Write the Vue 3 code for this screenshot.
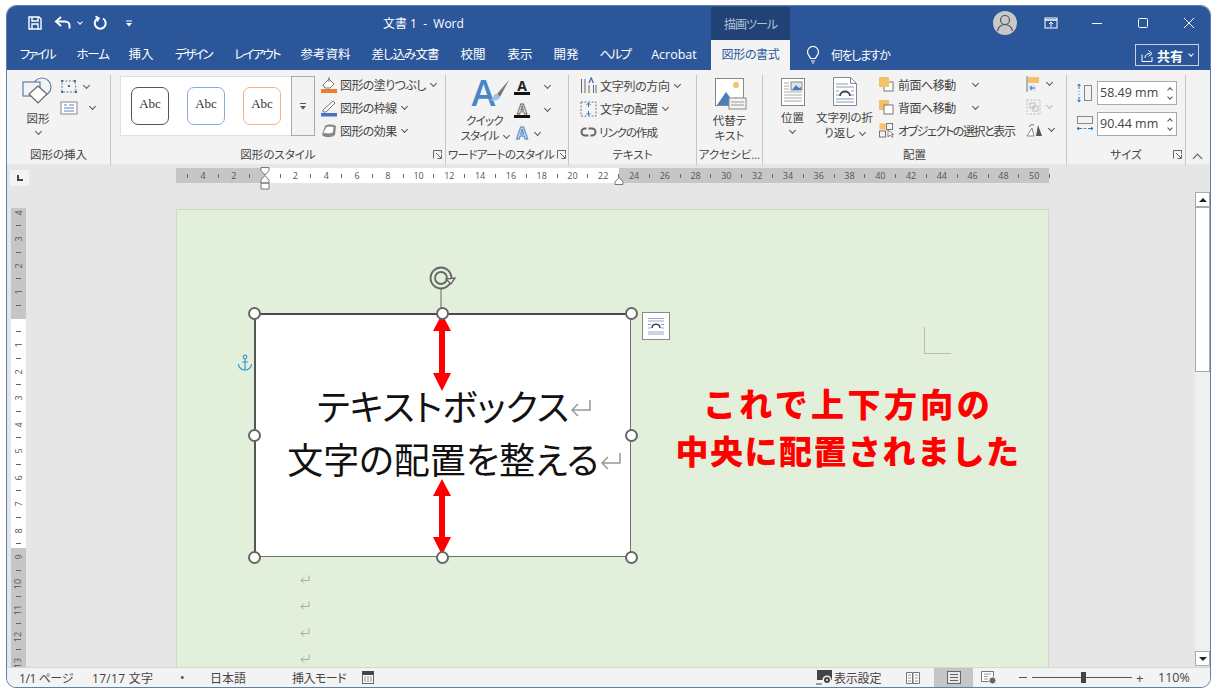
<template>
  <div class="window">
    <!-- タイトルバー -->
    <header class="titlebar">
      <div class="qat">
        <svg width="16" height="16" viewBox="0 0 16 16" fill="none" stroke="#fff" stroke-width="1.4"><path d="M2 2h10l2 2v10H2z"/><path d="M5 2v4h6V2M5 14V9h6v5"/></svg>
        <svg class="undo" width="18" height="14" viewBox="0 0 18 14" fill="none" stroke="#fff" stroke-width="2"><path d="M7 1L2 5.500l5 4.500"/><path d="M2 5.500h9c3 0 4.500 2 4.500 4v3"/></svg>
        <i class="chev white small"></i>
        <svg class="redo" width="16" height="16" viewBox="0 0 16 16" fill="none" stroke="#fff" stroke-width="2"><path d="M6 3.200a5.500 5.500 0 1 0 5 .3"/><path d="M3.500 1.200L7 3.300 5 6.500" stroke-width="1.700"/></svg>
        <svg class="qat-more" width="8" height="8" viewBox="0 0 8 8" fill="#fff"><path d="M1 1.500h6v1H1zM1 4h6L4 7.500z"/></svg>
      </div>
      <div class="doc-title">文書 1&nbsp; -&nbsp; Word</div>
      <div class="tool-tab">描画ツール</div>
      <div class="win-right">
        <div class="avatar">
          <svg width="24" height="24" viewBox="0 0 24 24" fill="none" stroke="#555" stroke-width="1.200"><circle cx="12" cy="9" r="4.500"/><path d="M4.500 20c1-4.500 4-6.500 7.500-6.500s6.500 2 7.500 6.500"/></svg>
        </div>
        <svg class="win-disp" width="14" height="12" viewBox="0 0 14 12" fill="none" stroke="#fff"><rect x="1" y="1" width="12" height="10"/><path d="M1 3h12" stroke-width="1.500"/><path d="M7 10V5M5 7l2-2 2 2"/></svg>
        <svg class="win-min" width="12" height="12" viewBox="0 0 12 12" stroke="#fff"><path d="M1 6.500h10"/></svg>
        <svg class="win-max" width="12" height="12" viewBox="0 0 12 12" fill="none" stroke="#fff"><rect x="1.500" y="1.500" width="9" height="9" rx="1"/></svg>
        <svg class="win-close" width="12" height="12" viewBox="0 0 12 12" stroke="#fff"><path d="M1 1l10 10M11 1L1 11"/></svg>
      </div>
    </header>

    <!-- タブ -->
    <nav class="tabs">
      <div v-for="t in tabs" :key="t.name" class="tab" :style="{ width: t.w + 'px', letterSpacing: t.ls + 'px' }">{{ t.name }}</div>
      <div class="tab active">図形の書式</div>
      <svg class="bulb" width="14" height="18" viewBox="0 0 14 18" fill="none" stroke="#fff" stroke-width="1.200"><path d="M4.500 12.500C4 10 1.500 9 1.500 6a5.500 5.500 0 0 1 11 0c0 3-2.500 4-3 6.500z"/><path d="M5 15h4M6 17h2"/></svg>
      <div class="tell-me">何をしますか</div>
      <div class="share">
        <svg width="13" height="13" viewBox="0 0 13 13" fill="none" stroke="#fff"><path d="M1 5.500v7h10V8M4 9c0-3 2-4.500 5-4.500M7.500 1.500l3.500 3-3.500 3"/></svg>
        <b>共有</b>
        <i class="chev white small"></i>
      </div>
    </nav>

    <!-- リボン -->
    <section class="ribbon">
      <div class="group g-insert">
        <div class="group-body">
          <div class="big-btn shape-btn">
            <svg width="32" height="28" viewBox="0 0 32 28" fill="none" stroke="#5f7ea5" stroke-width="1.200"><circle cx="20" cy="10" r="9"/><rect x="1" y="5" width="17" height="14" fill="#f3f3f3"/><path d="M16 9l9 8-9 9-9-9z" fill="#fff" stroke="#666"/></svg>
            <span>図形</span>
            <i class="chev"></i>
          </div>
          <div class="shape-side">
            <div class="mini-row">
              <svg width="18" height="15" viewBox="0 0 18 15" fill="none" stroke="#777" stroke-dasharray="2 1.500"><path d="M2 2h13l1 11H2z"/><g fill="#3a6ea5" stroke="none"><rect x="1" y="1" width="2" height="2"/><rect x="14" y="1" width="2" height="2"/><rect x="1" y="12" width="2" height="2"/><rect x="15" y="12" width="2" height="2"/><rect x="8" y="6" width="2" height="2"/></g></svg>
              <i class="chev"></i>
            </div>
            <div class="mini-row">
              <svg width="18" height="14" viewBox="0 0 18 14" fill="#fff" stroke="#888"><rect x="1" y="1" width="16" height="12"/><path d="M4 4h3M9 4h5M4 7h10M4 10h10" stroke="#5b86b8"/></svg>
              <i class="chev wide"></i>
            </div>
          </div>
        </div>
        <div class="group-label">図形の挿入</div>
      </div>

      <div class="group g-style">
        <div class="group-body">
          <div class="gallery">
            <div class="swatch s-dark">Abc</div>
            <div class="swatch s-blue">Abc</div>
            <div class="swatch s-orange">Abc</div>
            <div class="gallery-more">
              <svg width="8" height="8" viewBox="0 0 8 8" fill="#555"><path d="M1 1h6v1H1zM1 4h6L4 7.500z"/></svg>
            </div>
          </div>
          <div class="stack stack-style">
            <div class="stack-row">
              <svg width="18" height="18" viewBox="0 0 18 18"><path d="M3 9l6-6 5 5-4 4H5z" fill="#fff" stroke="#777"/><path d="M9 1v5" stroke="#777"/><rect x="1" y="13" width="16" height="4" fill="#ed7d31"/></svg>
              <span>図形の塗りつぶし</span><i class="chev"></i>
            </div>
            <div class="stack-row">
              <svg width="18" height="18" viewBox="0 0 18 18"><path d="M3 11L13 2l2 2L6 13H3z" fill="#fff" stroke="#777"/><rect x="1" y="14" width="16" height="3.500" fill="#4472c4"/></svg>
              <span>図形の枠線</span><i class="chev"></i>
            </div>
            <div class="stack-row">
              <svg width="18" height="18" viewBox="0 0 18 18"><path d="M2 13l3-9c2-2 8-2 11 0l-1 9c-4 3-10 3-13 0z" fill="#888"/><path d="M3 11l3-6c2-1 6-1 8 0l-1 6c-3 1-7 1-10 0z" fill="#fff" stroke="#777" stroke-width=".6"/></svg>
              <span>図形の効果</span><i class="chev"></i>
            </div>
          </div>
        </div>
        <div class="group-label">図形のスタイル<svg class="launcher" width="9" height="9" viewBox="0 0 9 9" fill="none" stroke="#666"><path d="M.5 8.500v-8h8v3M3 3l5 5M4.500 8.500h4v-4"/></svg></div>
      </div>

      <div class="group g-art">
        <div class="group-body">
          <div class="big-btn art-btn">
            <div class="art-icon">
              <span class="art-a">A</span>
              <svg width="22" height="26" viewBox="0 0 22 26"><path d="M21 1L9 15l3 3z" fill="#777"/><path d="M9 15c-3 0-4 2-4 4l-3 2c3 1 9 1 10-3z" fill="#9dc3e6"/></svg>
            </div>
            <span>クイック</span>
            <span class="with-chev">スタイル<i class="chev"></i></span>
          </div>
          <div class="art-side">
            <div class="art-row"><span class="a-fill">A</span><i class="chev cw"></i></div>
            <div class="art-row"><span class="a-line">A</span><i class="chev cw"></i></div>
            <div class="art-row"><span class="a-fx">A</span><i class="chev"></i></div>
          </div>
        </div>
        <div class="group-label art-label">ワードアートのスタイル<svg class="launcher" width="9" height="9" viewBox="0 0 9 9" fill="none" stroke="#666"><path d="M.5 8.500v-8h8v3M3 3l5 5M4.500 8.500h4v-4"/></svg></div>
      </div>

      <div class="group g-text">
        <div class="group-body">
          <div class="stack stack-text">
            <div class="stack-row">
              <svg width="17" height="18" viewBox="0 0 17 18" fill="none" stroke="#666"><path d="M1.500 2v14M5 2v14M9 8v8M13.500 8v8M16 8v8" /><path d="M9 6l2.200-5 2.200 5" stroke="#2e75b6" stroke-width="1.300"/></svg>
              <span>文字列の方向</span><i class="chev"></i>
            </div>
            <div class="stack-row">
              <svg width="17" height="18" viewBox="0 0 17 18" fill="none"><rect x="1" y="2" width="15" height="14" stroke="#777" stroke-dasharray="2 1.500"/><path d="M8.500 3v4M6.500 5l2-2 2 2M8.500 15v-4M6.500 13l2 2 2-2" stroke="#2e75b6"/></svg>
              <span>文字の配置</span><i class="chev"></i>
            </div>
            <div class="stack-row">
              <svg width="16" height="10" viewBox="0 0 16 10" fill="none" stroke="#666" stroke-width="2"><path d="M6 1.500H4.500a3.500 3.500 0 0 0 0 7H8"/><path d="M10 8.500h1.500a3.500 3.500 0 0 0 0-7H8"/></svg>
              <span class="tight">リンクの作成</span>
            </div>
          </div>
        </div>
        <div class="group-label">テキスト</div>
      </div>

      <div class="group g-alt">
        <div class="group-body">
          <div class="big-btn alt-btn">
            <svg width="32" height="32" viewBox="0 0 32 32"><rect x=".5" y=".5" width="28" height="27" fill="#fff" stroke="#888"/><circle cx="21" cy="7" r="3" fill="#f4c266"/><path d="M2 27l9-13 6 8 4-3 7 8z" fill="#4a7ebb"/><rect x="14" y="20" width="17" height="11" fill="#f3f3f3" stroke="#888"/><path d="M16 24h13M16 27h13" stroke="#999"/></svg>
            <span>代替テ</span>
            <span>キスト</span>
          </div>
        </div>
        <div class="group-label">アクセシビ…</div>
      </div>

      <div class="group g-arrange">
        <div class="group-body">
          <div class="big-btn pos-btn">
            <svg width="24" height="28" viewBox="0 0 24 28" fill="none" stroke="#aaa"><rect x=".5" y=".5" width="23" height="27" fill="#fff" stroke="#888"/><path d="M3 5h5M3 8h5M3 11h5M3 14h18M3 17h18M3 20h18M3 23h18"/><rect x="10" y="4" width="11" height="8" fill="#dce6f2" stroke="#888"/><path d="M11 12l4-5 3 3 2-1v3z" fill="#4a7ebb" stroke="none"/></svg>
            <span>位置</span>
            <i class="chev"></i>
          </div>
          <div class="big-btn wrap-btn">
            <svg width="24" height="29" viewBox="0 0 24 29" fill="none" stroke="#7f9ec4"><path d="M.5.5h17l6 6v22H.500z" fill="#fff" stroke="#888"/><path d="M17.500.5v6h6" stroke="#888"/><path d="M3 7h12M3 10h18M3 22h18M3 25h18M3 14h3M18 14h3M3 18h3M18 18h3"/><path d="M7 19c0-6 10-6 10 0" stroke="#444" stroke-width="1.800"/></svg>
            <span>文字列の折</span>
            <span class="with-chev">り返し<i class="chev"></i></span>
          </div>
          <div class="stack stack-arrange">
            <div class="stack-row">
              <svg width="15" height="15" viewBox="0 0 15 15"><rect x="5" y="5" width="9" height="9" fill="#fff" stroke="#777"/><rect x="0" y="0" width="10" height="10" fill="#f4c266"/></svg>
              <span>前面へ移動</span><i class="chev c-far"></i>
            </div>
            <div class="stack-row">
              <svg width="15" height="15" viewBox="0 0 15 15"><rect x="0" y="0" width="10" height="10" fill="#f4c266"/><rect x="5" y="5" width="9" height="9" fill="#fff" stroke="#777"/></svg>
              <span>背面へ移動</span><i class="chev c-far"></i>
            </div>
            <div class="stack-row">
              <svg width="15" height="15" viewBox="0 0 15 15" fill="none" stroke="#777"><rect x=".5" y=".5" width="6" height="6" fill="#f4c266" stroke="none"/><rect x=".5" y="8" width="6" height="6"/><rect x="7.500" y=".5" width="6" height="6"/><path d="M9 7v7l2-2 2 2.500 1-.7-1.500-2.300h2z" fill="#fff" stroke="#555" stroke-width=".7"/></svg>
              <span class="select-pane">オブジェクトの選択と表示</span>
            </div>
          </div>
          <div class="stack stack-tools">
            <div class="stack-row">
              <svg width="15" height="16" viewBox="0 0 15 16"><path d="M1 0v16" stroke="#777"/><rect x="2" y="1" width="11" height="6" fill="#f4c266"/><rect x="2" y="9" width="8" height="6" fill="#dbe5f1"/><path d="M9 12H4M6 10l-2 2 2 2" stroke="#2e75b6" fill="none"/></svg>
              <i class="chev"></i>
            </div>
            <div class="stack-row dim">
              <svg width="15" height="16" viewBox="0 0 15 16" fill="none" stroke="#bbb"><rect x="1" y="1" width="13" height="14" stroke-dasharray="2 1.500"/><rect x="4" y="4" width="5" height="5"/><rect x="7" y="7" width="5" height="5"/></svg>
              <i class="chev light"></i>
            </div>
            <div class="stack-row">
              <svg width="17" height="14" viewBox="0 0 17 14"><path d="M16 13H10l2-11z" fill="#555"/><path d="M1 13h7L6 5z" fill="#fff" stroke="#888"/><path d="M3 4c1-2 3-3 5-2" stroke="#2e75b6" fill="none"/></svg>
              <i class="chev"></i>
            </div>
          </div>
        </div>
        <div class="group-label">配置</div>
      </div>

      <div class="group g-size">
        <div class="group-body size-body">
          <div class="size-row">
            <svg width="18" height="20" viewBox="0 0 18 20" fill="none"><path d="M3 1v5M1.500 3l1.500-2 1.500 2M3 19v-5M1.500 17l1.500 2 1.500-2" stroke="#2e75b6"/><path d="M3 8v1M3 11v1" stroke="#888"/><rect x="8.500" y="2.500" width="7" height="15" stroke="#888"/></svg>
            <div class="spin">58.49 mm<span class="spin-btns"><i class="chev up"></i><i class="chev"></i></span></div>
          </div>
          <div class="size-row">
            <svg width="18" height="20" viewBox="0 0 18 20" fill="none"><rect x="1.500" y="2.500" width="15" height="7" stroke="#888"/><path d="M1 14.500h5M3 13l-2 1.500L3 16M17 14.500h-5M15 13l2 1.500L15 16" stroke="#2e75b6"/><path d="M7.500 14.500h3" stroke="#888"/></svg>
            <div class="spin">90.44 mm<span class="spin-btns"><i class="chev up"></i><i class="chev"></i></span></div>
          </div>
        </div>
        <div class="group-label">サイズ<svg class="launcher" width="9" height="9" viewBox="0 0 9 9" fill="none" stroke="#666"><path d="M.5 8.500v-8h8v3M3 3l5 5M4.500 8.500h4v-4"/></svg></div>
      </div>
      <i class="chev up collapse"></i>
    </section>

    <!-- 水平ルーラー -->
    <div class="ruler-row">
      <div class="tab-stop"><span></span></div>
      <div class="h-ruler">
        <div v-for="m in hMarks" :key="m.i" class="h-mark">
          <template v-if="m.label">{{ m.label }}</template>
          <i v-else-if="m.tick"></i>
        </div>
        <svg class="indent-top" width="10" height="9" viewBox="0 0 10 9" fill="#fff" stroke="#777"><path d="M1 .5h8v3L5 8 1 3.500z"/></svg>
        <svg class="indent-bottom" width="10" height="15" viewBox="0 0 10 15" fill="#fff" stroke="#777"><path d="M5 .5l4 4.500v3H1V5zM1 8h8v6H1z"/></svg>
        <svg class="indent-right" width="10" height="8" viewBox="0 0 10 8" fill="#fff" stroke="#777"><path d="M5 .5l4 4.500v2.500H1V5z"/></svg>
      </div>
    </div>

    <!-- 文書エリア -->
    <main class="doc-area">
      <div class="v-ruler">
        <div class="v-inner">
          <div v-for="m in vMarks" :key="m.i" class="v-mark">
            <span v-if="m.label">{{ m.label }}</span>
            <i v-else-if="m.tick"></i>
          </div>
        </div>
      </div>

      <div class="page">
        <div class="crop-mark"></div>
        <svg class="anchor" width="16" height="18" viewBox="0 0 16 18" fill="none" stroke="#3c9ccf" stroke-width="1.200"><circle cx="8" cy="3" r="1.800"/><path d="M8 5v11M5 8h6M1.500 10c0 3.500 3 6 6.500 6s6.500-2.500 6.500-6"/></svg>

        <div class="textbox">
          <div class="tb-text">
            <div class="tb-line">テキストボックス<svg class="ret big" width="22" height="19" viewBox="0 0 22 19" fill="none" stroke="#999" stroke-width="1.500"><path d="M20 1v10H2M8 5l-6 6 6 6"/></svg></div>
            <div class="tb-line">文字の配置を整える<svg class="ret big" width="22" height="19" viewBox="0 0 22 19" fill="none" stroke="#999" stroke-width="1.500"><path d="M20 1v10H2M8 5l-6 6 6 6"/></svg></div>
          </div>
          <svg class="rotate-handle" width="28" height="48" viewBox="0 0 28 48" fill="none" stroke="#666">
            <circle cx="12" cy="12" r="10.500" stroke-width="1.800"/>
            <circle cx="12" cy="12" r="6" stroke-width="1.800"/>
            <path d="M17 13l5 5 4-6z" fill="#f3f3f3" stroke-width="1.400"/>
            <path d="M12 23v25" stroke-width="1"/>
          </svg>
          <svg class="red-arrows" width="378" height="245" viewBox="0 0 378 245" fill="#f00">
            <path d="M187 2l9 17h-6v42h6l-9 18-9-18h6V19h-6z"/>
            <path d="M187 167l9 17h-6v41h6l-9 18-9-18h6v-41h-6z"/>
          </svg>
          <div class="handles">
            <span v-for="h in handles" :key="h.k" class="handle" :style="{ left: h.x + '%', top: h.y + '%' }"></span>
          </div>
          <div class="layout-opt">
            <svg width="18" height="18" viewBox="0 0 18 18" fill="none" stroke="#8ea9cf"><path d="M1 1.500h16M1 4h16M1 15h16M1 17h16M1 7.500h3M14 7.500h3M1 11h3M14 11h3"/><path d="M5 11c0-5 8-5 8 0" stroke="#444" stroke-width="1.500"/></svg>
          </div>
        </div>

        <div class="note">
          <div class="note-first">これで上下方向の</div>
          <div>中央に配置されました</div>
        </div>

        <div class="para-list">
          <svg v-for="n in 4" :key="n" class="ret" width="10" height="9" viewBox="0 0 10 9" fill="none" stroke="#aaa"><path d="M9 .5v5H1M4 2.500l-3 3 3 3"/></svg>
        </div>
      </div>

      <div class="scrollbar">
        <div class="sb-btn"><span class="tri-up"></span></div>
        <div class="sb-thumb"></div>
        <div class="sb-track"></div>
        <div class="sb-btn"><span class="tri-down"></span></div>
      </div>
    </main>

    <!-- ステータスバー -->
    <footer class="status">
      <span class="st-page">1/1 ページ</span>
      <span class="st-count">17/17 文字</span>
      <span class="st-dot">•</span>
      <span class="st-lang">日本語</span>
      <span class="st-mode">挿入モード</span>
      <svg class="st-macro" width="12" height="13" viewBox="0 0 12 13"><rect x=".5" y="2" width="11" height="10.500" fill="#fff" stroke="#666"/><rect x="0" y="0" width="12" height="4" fill="#444"/><path d="M2 6h2M5 6h2M8 6h2M2 8h2M5 8h2M8 8h2M2 10h2M5 10h2M8 10h2" stroke="#888"/></svg>
      <div class="st-right">
        <svg class="st-disp" width="18" height="16" viewBox="0 0 18 16"><path d="M1 0h15v10H1z" fill="#444"/><circle cx="11" cy="10" r="4.500" fill="#f3f3f3"/><circle cx="11" cy="10" r="3" fill="#444"/><circle cx="11" cy="10" r="1" fill="#f3f3f3"/><path d="M0 14h6" stroke="#444"/></svg>
        <span class="st-view">表示設定</span>
        <svg class="st-read" width="14" height="12" viewBox="0 0 14 12" fill="#fff" stroke="#777"><path d="M.5.500h6v11h-6zM7 .5h6.500v11H7z"/><path d="M2 3h3M2 6h3M2 9h3M9 3h3M9 6h3M9 9h3" stroke="#999"/></svg>
        <div class="st-active">
          <svg width="14" height="13" viewBox="0 0 14 13" fill="#e8e8e8" stroke="#666"><rect x=".5" y=".5" width="13" height="12"/><path d="M3 3.500h8M3 6.500h8M3 9.500h8"/></svg>
        </div>
        <svg class="st-web" width="16" height="14" viewBox="0 0 16 14" fill="#fff" stroke="#777"><path d="M.5.500h12v10H.5z"/><path d="M3 3h7M3 5.500h4M3 8h4" stroke="#999"/><circle cx="11.500" cy="9.500" r="3.500" fill="#666" stroke="#f3f3f3"/></svg>
        <span class="zoom-minus"></span>
        <div class="slider"><span></span></div>
        <span class="zoom-plus">+</span>
        <span class="zoom-val">110%</span>
      </div>
    </footer>
  </div>
</template>

<script setup>
const tabs = [
  { name: 'ファイル', w: 56, ls: -2.2 },
  { name: 'ホーム', w: 55, ls: -1.2 },
  { name: '挿入', w: 42, ls: 0 },
  { name: 'デザイン', w: 62, ls: -2.4 },
  { name: 'レイアウト', w: 66, ls: -1.8 },
  { name: '参考資料', w: 71, ls: 0 },
  { name: '差し込み文書', w: 88, ls: -1 },
  { name: '校閲', w: 48, ls: 0 },
  { name: '表示', w: 46, ls: 0 },
  { name: '開発', w: 46, ls: 0 },
  { name: 'ヘルプ', w: 52, ls: -1.6 },
  { name: 'Acrobat', w: 66, ls: 0 },
]

// 1 目盛 = 15.4px、0 の位置から左右へ振る
const hMarks = []
for (let i = -5; i <= 51; i++) {
  hMarks.push({ i, tick: i !== 0 && i % 2 !== 0, label: i !== 0 && i % 2 === 0 ? String(Math.abs(i)) : '' })
}

const vMarks = []
for (let i = -8; i <= 27; i++) {
  vMarks.push({ i, tick: i !== 0 && i % 2 !== 0, label: i !== 0 && i % 2 === 0 ? String(Math.abs(i / 2)) : '' })
}

const handles = [
  { k: 'tl', x: 0, y: 0 }, { k: 'tc', x: 50, y: 0 }, { k: 'tr', x: 100, y: 0 },
  { k: 'ml', x: 0, y: 50 }, { k: 'mr', x: 100, y: 50 },
  { k: 'bl', x: 0, y: 100 }, { k: 'bc', x: 50, y: 100 }, { k: 'br', x: 100, y: 100 },
]
</script>

<style>
html, body { margin: 0; background: #fff; }
</style>

<style scoped>
.window {
  box-sizing: border-box;
  width: 1205px;
  height: 683px;
  margin: 5px 0 0 6px;
  border: 1px solid #5d80ab;
  border-radius: 10px;
  overflow: hidden;
  display: flex;
  flex-direction: column;
  background: #e6e6e6;
  font-family: "Open Sans", "Noto Sans CJK JP", sans-serif;
  font-feature-settings: "palt";
  color: #444;
}
.chev {
  display: inline-block;
  width: 4px;
  height: 4px;
  border-right: 1px solid #555;
  border-bottom: 1px solid #555;
  transform: rotate(45deg);
  margin: -3px 0 0 7px;
  vertical-align: middle;
  flex: none;
}
.chev.white { border-color: #fff; }
.chev.small { width: 3px; height: 3px; }
.chev.up { transform: rotate(225deg); margin-top: 2px; }
.chev.light { border-color: #bbb; }

/* タイトルバー */
.titlebar {
  height: 34px;
  background: #2b579a;
  display: flex;
  align-items: center;
  color: #fff;
  flex: none;
}
.qat { width: 376px; padding-left: 20px; box-sizing: border-box; display: flex; align-items: center; flex: none; }
.qat .undo { margin-left: 11px; }
.qat .chev { margin: -3px 0 0 6px; }
.qat .redo { margin-left: 10px; }
.qat .qat-more { margin-left: 17px; }
.doc-title { width: 328px; text-align: left; font-size: 12px; flex: none; }
.tool-tab {
  width: 79px;
  height: 33px;
  margin-top: 1px;
  background: #204275;
  color: #b4c3da;
  font-size: 12px;
  letter-spacing: -1px;
  display: flex;
  align-items: center;
  justify-content: center;
  flex: none;
}
.win-right { display: flex; align-items: center; flex: 1; padding-left: 203px; }
.avatar { width: 24px; height: 24px; border-radius: 50%; background: #c8c8c8; flex: none; overflow: hidden; }
.win-disp { margin-left: 27px; }
.win-min { margin-left: 33px; }
.win-max { margin-left: 34px; }
.win-close { margin-left: 34px; }

/* タブ */
.tabs {
  height: 30px;
  background: #2b579a;
  display: flex;
  align-items: center;
  padding-left: 2px;
  color: #fff;
  font-size: 12.5px;
  flex: none;
}
.tab { text-align: center; flex: none; height: 30px; line-height: 30px; white-space: nowrap; }
.tab.active {
  width: 79px;
  margin-left: 4px;
  background: #f3f3f3;
  color: #2b579a;
  font-size: 12px;
  letter-spacing: -.3px;
}
.bulb { margin-left: 16px; flex: none; }
.tell-me { margin-left: 11px; font-size: 12px; letter-spacing: -1.4px; width: 304px; flex: none; }
.share {
  box-sizing: border-box;
  width: 64px;
  height: 22px;
  border: 1px solid #c5d2e3;
  display: flex;
  align-items: center;
  justify-content: center;
  font-size: 13px;
  flex: none;
}
.share b { margin-left: 3px; }
.share .chev { margin-left: 6px; }

/* リボン */
.ribbon {
  height: 94px;
  background: #f3f3f3;
  display: flex;
  font-size: 12px;
  color: #444;
  flex: none;
  position: relative;
}
.group {
  position: relative;
  display: flex;
  flex-direction: column;
  height: 90px;
  margin-top: 5px;
  border-right: 1px solid #c6c6c6;
  box-sizing: border-box;
  flex: none;
}
.group-body { flex: 1; display: flex; min-height: 0; }
.group-label {
  height: 18px;
  line-height: 16px;
  text-align: center;
  font-size: 11.5px;
  position: relative;
  white-space: nowrap;
}
.art-label { text-align: left; padding-left: 2px; letter-spacing: -.65px; }
.launcher { position: absolute; right: 3px; top: 3px; }
.g-insert { width: 104px; }
.g-style { width: 335px; }
.g-art { width: 123px; }
.g-text { width: 128px; }
.g-alt { width: 66px; }
.g-arrange { width: 304px; }
.g-size { width: 119px; }
.g-art .launcher { right: 2px; }
.big-btn {
  display: flex;
  flex-direction: column;
  align-items: center;
  line-height: 15px;
  font-size: 11.5px;
  white-space: nowrap;
}
.big-btn .chev { margin: 3px 0 0; }
.big-btn .with-chev .chev { margin: -3px 0 0 5px; }
.shape-btn { width: 62px; padding-top: 2px; }
.shape-btn svg { margin-bottom: 6px; }
.shape-side { display: flex; flex-direction: column; gap: 4px; padding-top: 3px; margin-left: -9px; }
.mini-row { display: flex; align-items: center; height: 17px; }
.mini-row .chev { margin-left: 6px; }
.mini-row .chev.wide { margin-left: 12px; }

.gallery {
  display: flex;
  align-items: center;
  width: 195px;
  height: 60px;
  margin: 1px 0 0 9px;
  background: #fff;
  border: 1px solid #e0e0e0;
  border-right: 0;
  box-sizing: border-box;
  padding-left: 10px;
  flex: none;
  gap: 18px;
  position: relative;
}
.swatch {
  width: 38px;
  height: 38px;
  box-sizing: border-box;
  border-radius: 7px;
  background: #fff;
  font-family: "Liberation Serif", serif;
  font-size: 13px;
  color: #333;
  text-align: center;
  line-height: 31px;
  flex: none;
}
.s-dark { border: 1.500px solid #555; }
.s-blue { border: 1.500px solid #8eaadb; }
.s-orange { border: 1.500px solid #f4b183; }
.gallery-more {
  position: absolute;
  right: 0;
  top: -1px;
  bottom: -1px;
  width: 24px;
  box-sizing: border-box;
  border: 1px solid #aaa;
  display: flex;
  align-items: center;
  justify-content: center;
  background: #f3f3f3;
}
.stack { display: flex; flex-direction: column; white-space: nowrap; flex: none; }
.stack-row { height: 23px; display: flex; align-items: center; }
.stack-style { margin: -2px 0 0 5px; }
.stack-style span { margin-left: 2px; letter-spacing: -.6px; }
.stack-style .chev { margin-left: 5px; }

.art-btn { width: 75px; margin-right: -8px; letter-spacing: -.8px; }
.art-icon { height: 33px; width: 40px; position: relative; display: flex; margin-top: 1px; margin-bottom: 4px; padding-left: 7px; box-sizing: border-box; }
.art-a { font-family: "Open Sans", sans-serif; font-size: 36px; font-weight: 600; color: #4a86c5; line-height: 33px; width: 22px; flex: none; }
.art-icon svg { margin: 3px 0 0 -6px; flex: none; }
.art-side { display: flex; flex-direction: column; }
.art-row { height: 23.500px; display: flex; align-items: center; width: 48px; }
.art-row span { font-family: "Open Sans", sans-serif; font-weight: 700; font-size: 14px; text-align: center; width: 16px; line-height: 13px; }
.a-fill { color: #222; border-bottom: 3px solid #111; }
.a-line { color: transparent; -webkit-text-stroke: .8px #555; font-weight: 400; border-bottom: 3px solid #111; }
.a-fx { color: #dbe9f7; -webkit-text-stroke: 1px #4a86c5; font-size: 16px !important; }
.art-row .chev { margin-left: 5px; }
.art-row .chev.cw { margin-left: 15px; }
.g-art .group-body { padding-left: 1px; }

.stack-text { margin: -1px 0 0 11px; }
.stack-text svg { width: 17px; }
.stack-text span { margin-left: 3px; letter-spacing: -.3px; }
.stack-text .chev { margin-left: 5px; }
.stack-text .tight { margin-left: 2px; font-size: 11.500px; letter-spacing: -1px; }
.alt-btn { width: 65px; padding-top: 3px; }
.alt-btn svg { margin-bottom: 3px; margin-left: 2px; }
.pos-btn { width: 59px; padding-top: 3px; }
.pos-btn svg { margin-bottom: 4px; }
.wrap-btn { width: 57px; margin-left: -6px; padding-top: 2px; }
.wrap-btn svg { margin-bottom: 4px; }
.stack-arrange { margin: -2px 0 0 6px; width: 147px; }
.stack-arrange span { margin-left: 4px; letter-spacing: -.5px; }
.stack-arrange .select-pane { letter-spacing: -1.4px; }
.stack-arrange .c-far { margin-left: 17px; }
.stack-tools { margin-top: -3px; }
.stack-tools .chev { margin-left: 6px; }

.size-body { flex-direction: column; gap: 7px; padding: 6px 0 0 9px; }
.size-row { display: flex; align-items: center; height: 24px; gap: 3px; }
.spin {
  box-sizing: border-box;
  width: 80px;
  height: 24px;
  background: #fff;
  border: 1px solid #aaa;
  padding-left: 2px;
  font-size: 12.500px;
  line-height: 22px;
  color: #444;
  display: flex;
  justify-content: space-between;
  font-feature-settings: normal;
}
.spin-btns { display: flex; flex-direction: column; width: 12px; align-items: center; justify-content: center; }
.spin-btns .chev { width: 3px; height: 3px; margin: 0; }
.spin-btns .chev + .chev { margin-top: 3px; }
.collapse { position: absolute; left: 1187px; top: 83px; width: 6px; height: 6px; margin: 0; }

/* ルーラー */
.ruler-row { height: 26px; display: flex; flex: none; }
.tab-stop {
  width: 19px;
  height: 16px;
  margin: 6px 0 0 3px;
  background: #f3f3f3;
  display: flex;
  align-items: center;
  justify-content: center;
  flex: none;
}
.tab-stop span { width: 4px; height: 4px; border-left: 2px solid #444; border-bottom: 2px solid #444; }
.h-ruler {
  position: relative;
  width: 873px;
  height: 15px;
  margin: 4px 0 0 147px;
  padding-left: 4px;
  box-sizing: border-box;
  display: flex;
  align-items: center;
  background: linear-gradient(90deg, #c6c6c6 89px, #fff 89px, #fff 443px, #c6c6c6 443px);
  font-size: 9px;
  color: #555;
  font-feature-settings: normal;
}
.h-mark { width: 15.400px; flex: none; display: flex; justify-content: center; }
.h-mark i { width: 1px; height: 4px; background: #666; }
.indent-top { position: absolute; left: 84px; top: -1px; }
.indent-bottom { position: absolute; left: 84px; top: 7px; }
.indent-right { position: absolute; left: 438px; top: 9px; }

.doc-area { flex: 1; display: flex; min-height: 0; overflow: hidden; }
.v-ruler {
  width: 15px;
  height: 459px;
  margin: 18px 0 0 4px;
  overflow: hidden;
  flex: none;
  background: linear-gradient(180deg, #c6c6c6 111px, #fff 111px, #fff 340px, #c6c6c6 340px);
  font-size: 9px;
  color: #555;
  font-feature-settings: normal;
}
.v-inner { margin-top: -2px; }
.v-mark { height: 13.250px; display: flex; align-items: center; justify-content: center; }
.v-mark span { transform: rotate(-90deg); line-height: 10px; }
.v-mark i { width: 5px; height: 1px; background: #666; }

.page {
  position: relative;
  box-sizing: border-box;
  width: 873px;
  height: 470px;
  margin: 19px 0 0 150px;
  background: #e2efda;
  border: 1px solid #ced8c8;
  flex: none;
}
.crop-mark {
  position: absolute;
  left: 747px;
  top: 117px;
  width: 26px;
  height: 26px;
  border-left: 1px solid #b9b9b9;
  border-bottom: 1px solid #b9b9b9;
}
.anchor { position: absolute; left: 60px; top: 144px; }
.textbox {
  position: absolute;
  left: 77px;
  top: 103px;
  box-sizing: border-box;
  width: 377px;
  height: 244px;
  background: #fff;
  border: 1px solid #6d736a;
  border-top: 2px solid #4a4a4a;
  border-left: 2px solid #555;
  display: flex;
  align-items: center;
  justify-content: center;
}
.tb-text {
  display: flex;
  flex-direction: column;
  align-items: center;
  padding-bottom: 7px;
  font-family: "Noto Sans CJK JP", sans-serif;
  font-size: 36px;
  color: #111;
  line-height: 53px;
  white-space: nowrap;
  font-weight: 400;
}
.tb-line { position: relative; width: fit-content; }
.ret.big { position: absolute; left: 100%; top: 20px; margin-left: 1px; }
.rotate-handle { position: absolute; left: 173px; top: -49px; }
.red-arrows { position: absolute; left: -1px; top: -3px; }
.handles { position: absolute; left: -2px; top: -2px; right: -1px; bottom: -1px; }
.handle {
  position: absolute;
  width: 9px;
  height: 9px;
  margin: -6.500px 0 0 -6.500px;
  background: #fff;
  border: 2px solid #666;
  border-radius: 50%;
}
.layout-opt {
  position: absolute;
  left: 386px;
  top: -3px;
  box-sizing: border-box;
  width: 28px;
  height: 28px;
  background: #fff;
  border: 1px solid #888;
  display: flex;
  align-items: center;
  justify-content: center;
}
.note {
  position: absolute;
  left: 481px;
  top: 170px;
  width: 380px;
  text-align: center;
  color: #f00;
  font-family: "Noto Sans CJK JP", sans-serif;
  font-weight: 900;
  font-size: 33px;
  line-height: 47px;
  letter-spacing: 1.500px;
  font-feature-settings: normal;
}
.note-first { letter-spacing: 3.400px; }
.para-list {
  padding: 365px 0 0 123px;
  display: flex;
  flex-direction: column;
  gap: 17.300px;
  align-items: flex-start;
}

.scrollbar { width: 15px; margin: 2px 0 1px 146px; display: flex; flex-direction: column; flex: none; }
.sb-btn {
  height: 15px;
  background: #fff;
  border: 1px solid #aaa;
  box-sizing: border-box;
  display: flex;
  align-items: center;
  justify-content: center;
  flex: none;
}
.tri-up { border: 4px solid transparent; border-top: 0; border-bottom: 4px solid #222; }
.tri-down { border: 4px solid transparent; border-bottom: 0; border-top: 4px solid #222; }
.sb-thumb { height: 165px; background: #fff; border: 1px solid #aaa; box-sizing: border-box; flex: none; }
.sb-track { flex: 1; background: #f0f0f0; }

/* ステータスバー */
.status {
  height: 20px;
  background: #f3f3f3;
  border-top: 1px solid #d6d6d6;
  box-sizing: border-box;
  display: flex;
  align-items: center;
  font-size: 12px;
  color: #444;
  flex: none;
  white-space: nowrap;
}
.st-page { margin-left: 12px; width: 73px; letter-spacing: -.4px; }
.st-count { width: 88px; letter-spacing: .3px; }
.st-dot { width: 30px; }
.st-lang { width: 82px; }
.st-mode { width: 70px; letter-spacing: -.5px; }
.st-right { display: flex; align-items: center; margin-left: 442px; height: 100%; }
.st-view { width: 46px; letter-spacing: -.2px; }
.st-read { margin-left: 26px; }
.st-active {
  width: 39px;
  height: 100%;
  margin-left: 14px;
  background: #c6c6c6;
  display: flex;
  align-items: center;
  justify-content: center;
}
.st-web { margin-left: 8px; }
.zoom-minus { width: 8px; height: 1px; background: #555; margin-left: 22px; }
.slider { position: relative; width: 100px; height: 1px; margin-left: 5px; background: #555; }
.slider span { position: absolute; left: 49px; top: -5px; width: 5px; height: 11px; background: #444; }
.zoom-plus { margin-left: 4px; font-size: 13px; width: 12px; }
.zoom-val { margin-left: 10px; font-size: 12.5px; }
</style>
